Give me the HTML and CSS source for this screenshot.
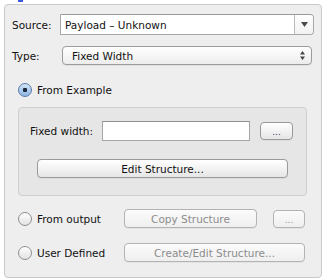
FILE: index.html
```html
<!DOCTYPE html>
<html>
<head>
<meta charset="utf-8">
<link rel="stylesheet" href="styles.css">
</head>
<body>
<div class="tip"></div>
<div class="panel">
  <div class="row source-row">
    <span class="label">Source:</span>
    <div class="combo">
      <span class="combo-text">Payload – Unknown</span>
      <span class="combo-btn"><svg width="7" height="5" viewBox="0 0 7 5"><path d="M0 0H7L3.5 5Z" fill="#4a4a4a"/></svg></span>
    </div>
  </div>
  <div class="row type-row">
    <span class="label">Type:</span>
    <div class="popup">
      <span class="popup-text">Fixed Width</span>
      <svg class="updown" width="5" height="9" viewBox="0 0 5 9"><path d="M0 3.5L2.5 0L5 3.5Z M0 5.5H5L2.5 9Z" fill="#444"/></svg>
    </div>
  </div>
  <div class="radio-row example-row">
    <span class="radio checked"></span><span class="radio-label">From Example</span>
  </div>
  <div class="group">
    <div class="row fw-row">
      <span class="fw-label">Fixed width:</span>
      <div class="field"></div>
      <button class="btn dots-btn"><span class="dots">...</span></button>
    </div>
    <button class="btn edit-btn">Edit Structure...</button>
  </div>
  <div class="row opt-row output-row">
    <span class="radio"></span><span class="radio-label opt-label">From output</span>
    <button class="btn disabled copy-btn">Copy Structure</button>
    <button class="btn disabled dots2-btn">...</button>
  </div>
  <div class="row opt-row user-row">
    <span class="radio"></span><span class="radio-label opt-label">User Defined</span>
    <button class="btn disabled create-btn">Create/Edit Structure...</button>
  </div>
</div>
</body>
</html>
```

FILE: styles.css
```css
html, body {
  margin: 0;
  padding: 0;
  background: #ffffff;
}
body {
  width: 325px;
  height: 280px;
  position: relative;
  overflow: hidden;
  font-family: "DejaVu Sans", sans-serif;
  font-size: 10.5px;
  color: #111;
}
.tip {
  position: absolute;
  left: 18px;
  top: 0;
  width: 5px;
  height: 2px;
  background: #3a5ae0;
}
.panel {
  margin: 4px 0 0 4px;
  width: 316px;
  height: 272px;
  border: 1px solid #c9c9c9;
  border-radius: 4px;
  background: #eeeeee;
  box-sizing: content-box;
  padding: 0;
  display: flex;
  flex-direction: column;
}
.row {
  display: flex;
  align-items: center;
}
.source-row {
  margin-top: 9px;
  padding-left: 7px;
}
.label {
  width: 48px;
}
.combo {
  width: 252px;
  height: 19px;
  border: 1px solid #a8a8a8;
  border-top-color: #9a9a9a;
  border-radius: 0 4px 4px 0;
  background: #fff;
  display: flex;
  align-items: center;
  box-sizing: content-box;
}
.combo-text {
  flex: 1;
  padding-left: 4px;
}
.combo-btn {
  width: 18px;
  height: 19px;
  border-left: 1px solid #bdbdbd;
  display: flex;
  align-items: center;
  justify-content: center;
  background: linear-gradient(#ffffff, #f1f1f1);
  border-radius: 0 4px 4px 0;
}
.type-row {
  margin-top: 11px;
  padding-left: 7px;
}
.type-row .label {
  width: 50px;
}
.popup {
  width: 248px;
  height: 17px;
  border: 1px solid #9c9c9c;
  border-radius: 4px;
  background: linear-gradient(#ffffff, #ececec);
  display: flex;
  align-items: center;
  box-shadow: 0 1px 0 rgba(0,0,0,0.05);
}
.popup-text {
  flex: 1;
  padding-left: 9px;
}
.updown {
  margin-right: 6px;
}
.radio-row {
  display: flex;
  align-items: center;
  margin-top: 18px;
  padding-left: 13px;
}
.radio {
  width: 12px;
  height: 12px;
  border-radius: 50%;
  border: 1px solid #8e8e8e;
  background: linear-gradient(#ffffff, #e2e2e2);
  box-sizing: content-box;
  flex: none;
}
.radio.checked {
  border-color: #5a7aa8;
  background: radial-gradient(circle at 50% 50%, #1c2a3c 0, #1c2a3c 2px, transparent 2.5px), linear-gradient(#d3e6f8, #8db5e4);
}
.radio-label {
  margin-left: 5px;
}
.group {
  margin: 10px 0 0 13px;
  width: 287px;
  height: 87px;
  border: 1px solid #cfcfcf;
  border-radius: 4px;
  background: #e6e6e6;
  display: flex;
  flex-direction: column;
}
.fw-row {
  margin-top: 13px;
  padding-left: 11px;
}
.fw-label {
  width: 72px;
}
.field {
  width: 146px;
  height: 18px;
  border: 1px solid #a5a5a5;
  border-top-color: #8f8f8f;
  background: #fff;
  box-sizing: content-box;
}
.btn {
  font-family: inherit;
  font-size: inherit;
  color: #111;
  border: 1px solid #9a9a9a;
  border-radius: 4px;
  background: linear-gradient(#ffffff, #f0f0f0 60%, #e6e6e6);
  padding: 0;
  margin: 0;
  display: flex;
  align-items: center;
  justify-content: center;
  box-shadow: 0 1px 0 rgba(0,0,0,0.04);
}
.dots-btn {
  margin-left: 10px;
  width: 33px;
  height: 18px;
}
.dots {
  color: #2b3a66;
  font-size: 9px;
  margin-top: 2px;
}
.edit-btn {
  margin: 18px 0 0 18px;
  width: 251px;
  height: 19px;
}
.opt-row {
  padding-left: 13px;
}
.opt-label {
  width: 87px;
}
.output-row {
  margin-top: 13px;
}
.user-row {
  margin-top: 15px;
}
.btn.disabled {
  color: #8c8c8c;
  border-color: #b3b3b3;
  background: linear-gradient(#fbfbfb, #efefef);
}
.copy-btn {
  width: 133px;
  height: 19px;
}
.dots2-btn {
  margin-left: 16px;
  width: 32px;
  height: 18px;
  font-size: 9px;
  padding-top: 2px;
}
.create-btn {
  width: 181px;
  height: 19px;
}
```
